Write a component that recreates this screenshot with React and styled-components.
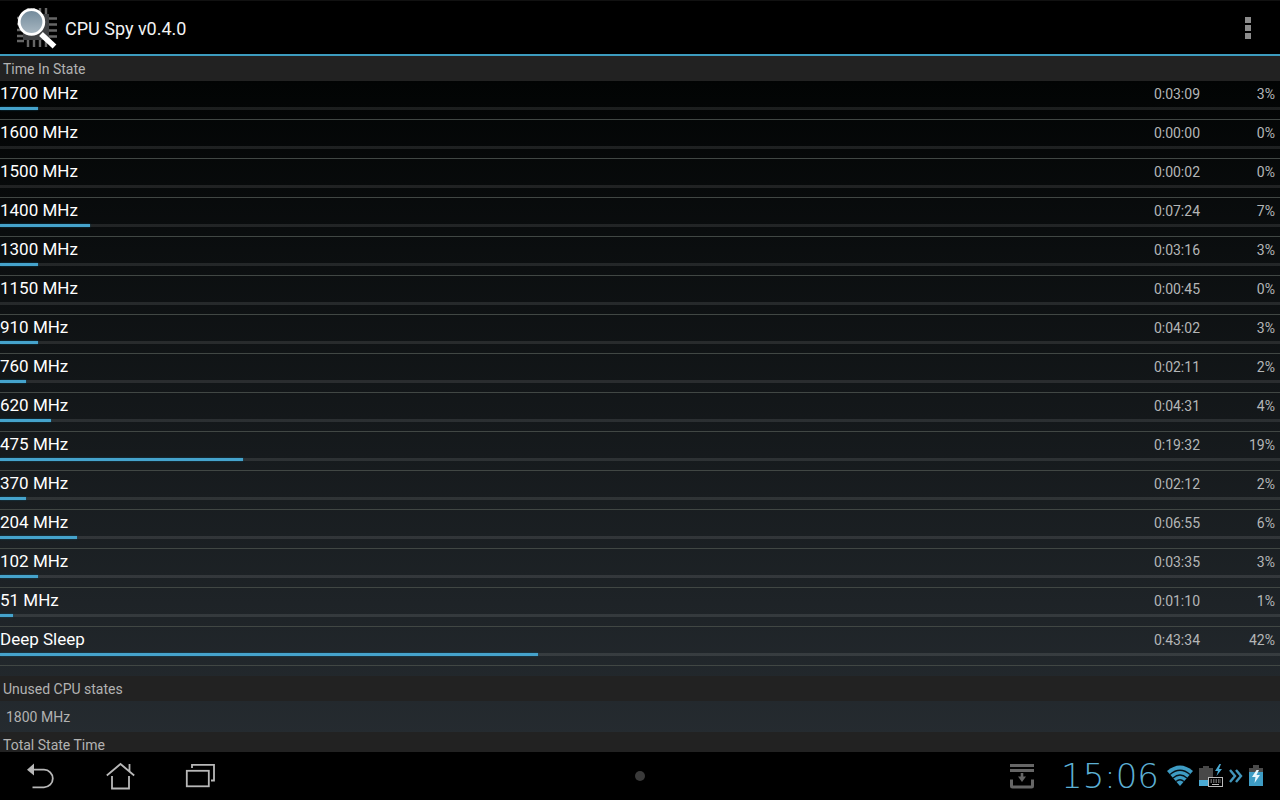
// ===== Logic =====
import styled, { createGlobalStyle } from "styled-components";

const states = [
  { name: "1700 MHz", time: "0:03:09", percent: 3 },
  { name: "1600 MHz", time: "0:00:00", percent: 0 },
  { name: "1500 MHz", time: "0:00:02", percent: 0 },
  { name: "1400 MHz", time: "0:07:24", percent: 7 },
  { name: "1300 MHz", time: "0:03:16", percent: 3 },
  { name: "1150 MHz", time: "0:00:45", percent: 0 },
  { name: "910 MHz", time: "0:04:02", percent: 3 },
  { name: "760 MHz", time: "0:02:11", percent: 2 },
  { name: "620 MHz", time: "0:04:31", percent: 4 },
  { name: "475 MHz", time: "0:19:32", percent: 19 },
  { name: "370 MHz", time: "0:02:12", percent: 2 },
  { name: "204 MHz", time: "0:06:55", percent: 6 },
  { name: "102 MHz", time: "0:03:35", percent: 3 },
  { name: "51 MHz", time: "0:01:10", percent: 1 },
  { name: "Deep Sleep", time: "0:43:34", percent: 42 },
];

// === Icons ===
function AppLogo() {
  return (
    <svg width="48" height="48" viewBox="0 0 48 48" fill="none" aria-hidden="true">
      <defs>
        <linearGradient id="lens" x1="0" y1="0" x2="0" y2="1">
          <stop offset="0" stopColor="#71899a" />
          <stop offset="1" stopColor="#aab9c3" />
        </linearGradient>
      </defs>
      <path
        d="M20 4v7M26 4v7M32 4v7M38 4v7M20 36v7M26 36v7M32 36v7M38 36v7M9 14h7M9 20h7M9 26h7M9 32h7M9 37h7M41 14.500h8M41 20.500h8M41 26.500h8M41 32.500h8"
        stroke="#666"
        strokeWidth="2.400"
      />
      <rect x="15" y="10" width="26" height="26" fill="#3f4143" />
      <path d="M33 30L46.500 42.500" stroke="#fff" strokeWidth="5.500" />
      <circle cx="23.500" cy="18" r="12.300" fill="url(#lens)" stroke="#fff" strokeWidth="2.800" />
    </svg>
  );
}

function OverflowIcon() {
  return (
    <svg width="6" height="22" viewBox="0 0 6 22" fill="#8c8c8c" aria-hidden="true">
      <rect width="6" height="6" />
      <rect y="8" width="6" height="6" />
      <rect y="16" width="6" height="6" />
    </svg>
  );
}

function BackIcon() {
  return (
    <svg width="32" height="32" viewBox="0 0 32 32" aria-hidden="true">
      <path d="M9 9.700H20a8.800 8.800 0 0 1 0 17.600H8.500" fill="none" stroke="#b8b8b8" strokeWidth="1.800" />
      <path d="M3 9.700L10 3.500V15.500Z" fill="#b8b8b8" />
    </svg>
  );
}

function HomeIcon() {
  return (
    <svg width="32" height="32" viewBox="0 0 32 32" fill="none" stroke="#b8b8b8" strokeWidth="1.800" aria-hidden="true">
      <path d="M2.800 15.500L16.500 4L30.200 15.500M25.500 11V4M8 16V28.500H25V16" />
    </svg>
  );
}

function RecentIcon() {
  return (
    <svg width="32" height="32" viewBox="0 0 32 32" fill="none" stroke="#b8b8b8" strokeWidth="1.800" aria-hidden="true">
      <rect x="2.800" y="10.800" width="22" height="15.500" />
      <path d="M8 8V4.800H30V20.500H27" />
    </svg>
  );
}

function TrayIcon() {
  return (
    <svg width="26" height="26" viewBox="0 0 26 26" fill="none" stroke="#666" aria-hidden="true">
      <path d="M1 2.500H25M1 7.500H25" strokeWidth="3" />
      <path d="M2.500 16.500V23Q2.500 24 3.500 24H22.500Q23.500 24 23.500 23V16.500" strokeWidth="3" />
      <path d="M13 10V14" strokeWidth="2.600" />
      <path d="M9 13.500H17L13 19Z" fill="#666" stroke="none" />
    </svg>
  );
}

function WifiIcon() {
  return (
    <svg width="26" height="22" viewBox="0 0 26 22" fill="none" aria-hidden="true">
      <path d="M0 6Q13 -5 26 6L13 21Z" fill="#3e9cc4" />
      <path d="M3 9.500Q13 1 23 9.500M6 13Q13 7 20 13M9 16.500Q13 13 17 16.500" stroke="#071118" strokeWidth="1.300" />
    </svg>
  );
}

function DockBatteryIcon() {
  return (
    <svg width="24" height="24" viewBox="0 0 24 24" fill="none" aria-hidden="true">
      <path d="M0 4H4V2H10V4H14V22H0Z" fill="#484848" />
      <path d="M0 16H9V22H0Z" fill="#4aa9d2" />
      <path d="M20.500 0L16 7H19L17.500 12L23 5H20L22 0Z" fill="#4aa9d2" />
      <rect x="9.500" y="13.500" width="14" height="9" fill="#000" stroke="#bbb" />
      <path d="M11.500 16H22M11.500 18H22" stroke="#bbb" strokeDasharray="1.500 1" />
      <path d="M13 20.500H20" stroke="#bbb" />
    </svg>
  );
}

function ChevronsIcon() {
  return (
    <svg width="14" height="14" viewBox="0 0 14 14" fill="none" stroke="#4296bb" strokeWidth="2.400" aria-hidden="true">
      <path d="M1 1L6 7L1 13M7 1L12 7L7 13" />
    </svg>
  );
}

function BatteryIcon() {
  return (
    <svg width="14" height="22" viewBox="0 0 14 22" aria-hidden="true">
      <path d="M0 3H4V0H10V3H14V8H0Z" fill="#4b4b4b" />
      <rect y="7" width="14" height="14" fill="#3e9cc4" />
      <path d="M7.500 5L3 12H6.500L5.500 18L11 10H7.500L10 5Z" fill="#e8f6fc" />
    </svg>
  );
}

// === Rows ===
function StateRow({ name, time, percent }) {
  return (
    <Row>
      <RowText>
        <StateName>{name}</StateName>
        <Duration>{time}</Duration>
        <Percent>{percent}%</Percent>
      </RowText>
      <Track role="progressbar" aria-label={name} aria-valuenow={percent}>
        <Fill style={{ width: `${percent}%` }} />
      </Track>
    </Row>
  );
}

export default function App() {
  return (
    <Screen>
      <GlobalStyle />

      {/* Action bar */}
      <ActionBar>
        <AppLogo />
        <Title>CPU Spy v0.4.0</Title>
        <MenuButton type="button" aria-label="More options">
          <OverflowIcon />
        </MenuButton>
      </ActionBar>

      {/* CPU states */}
      <Content>
        <SectionHeader>Time In State</SectionHeader>
        <StateList>
          {states.map((state) => (
            <StateRow key={state.name} {...state} />
          ))}
        </StateList>
        <SectionHeader>Unused CPU states</SectionHeader>
        <UnusedStates>1800 MHz</UnusedStates>
        <SectionHeader>Total State Time</SectionHeader>
      </Content>

      {/* System bar */}
      <SystemBar>
        <NavButtons>
          <NavButton type="button" aria-label="Back">
            <BackIcon />
          </NavButton>
          <NavButton type="button" aria-label="Home">
            <HomeIcon />
          </NavButton>
          <NavButton type="button" aria-label="Recent apps">
            <RecentIcon />
          </NavButton>
        </NavButtons>
        <Dot />
        <StatusArea>
          <TrayIcon />
          <Clock>15:06</Clock>
          <StatusIcons>
            <WifiIcon />
            <DockBatteryIcon />
            <ChevronsIcon />
            <BatteryIcon />
          </StatusIcons>
        </StatusArea>
      </SystemBar>
    </Screen>
  );
}

// ===== Styling =====
const GlobalStyle = createGlobalStyle`
  * {
    box-sizing: border-box;
  }

  body {
    margin: 0;
    background: #000;
    color: #fff;
    font-family: Roboto, "Liberation Sans", sans-serif;
  }
`;

const Screen = styled.div`
  display: flex;
  flex-direction: column;
  height: 100vh;
`;

const ActionBar = styled.header`
  display: flex;
  flex: none;
  align-items: center;
  height: 56px;
  padding: 0 16px 0 8px;
  border-top: 1px solid #111;
  border-bottom: 2px solid #3d9cbf;
  background: #000;

  svg {
    overflow: visible;
  }
`;

const Title = styled.h1`
  flex: 1;
  margin: 0 0 0 9px;
  font-size: 18px;
  font-weight: 400;
  line-height: 26px;
  padding-top: 2px;
  color: #f3f3f3;
`;

const MenuButton = styled.button`
  display: flex;
  align-items: center;
  justify-content: center;
  width: 32px;
  height: 48px;
  padding: 0;
  border: 0;
  background: none;
`;

const Content = styled.main`
  flex: 1;
  min-height: 0;
  overflow: hidden;
  background: linear-gradient(#000, #020404 4%, #262c31);
`;

const SectionHeader = styled.h2`
  height: 25px;
  margin: 0;
  padding: 0 3px;
  background: #222;
  color: #b2b2b2;
  font-size: 14px;
  font-weight: 400;
  line-height: 26px;
`;

const StateList = styled.ul`
  margin: 0 0 10px;
  padding: 0;
  list-style: none;
`;

const Row = styled.li`
  height: 39px;
  border-bottom: 1px solid #414744;
`;

const RowText = styled.div`
  display: flex;
  align-items: flex-start;
  height: 26px;
  padding-right: 5px;
`;

const StateName = styled.span`
  flex: 1;
  font-size: 17px;
  line-height: 24px;
`;

const Duration = styled.span`
  font-size: 14px;
  line-height: 26px;
  color: #b4b6b7;
`;

const Percent = styled(Duration)`
  width: 75px;
  text-align: right;
`;

const Track = styled.div`
  height: 3px;
  background: rgba(255, 255, 255, 0.1);
`;

const Fill = styled.div`
  height: 3px;
  background: #45a3cc;
  box-shadow: 0 0 2px #12516c;
`;

const UnusedStates = styled.p`
  margin: 0;
  padding: 1px 6px 0;
  color: #b2b2b2;
  font-size: 14px;
  line-height: 30px;
`;

const SystemBar = styled.footer`
  display: grid;
  grid-template-columns: 1fr auto 1fr;
  flex: none;
  align-items: center;
  height: 48px;
  background: #000;
`;

const NavButtons = styled.nav`
  display: flex;
`;

const NavButton = styled.button`
  display: flex;
  align-items: center;
  justify-content: center;
  width: 80px;
  height: 48px;
  padding: 0;
  border: 0;
  background: none;
`;

const Dot = styled.span`
  width: 10px;
  height: 10px;
  border-radius: 50%;
  background: #3a3a3a;
`;

const StatusArea = styled.div`
  display: flex;
  align-items: center;
  justify-content: flex-end;
  padding-right: 17px;
`;

const Clock = styled.time`
  margin: 0 8px 0 26px;
  color: #5cafd3;
  font-family: "DejaVu Sans", sans-serif;
  font-size: 34px;
  font-weight: 200;
  line-height: 48px;
`;

const StatusIcons = styled.div`
  display: flex;
  align-items: center;
  gap: 6px;
`;
